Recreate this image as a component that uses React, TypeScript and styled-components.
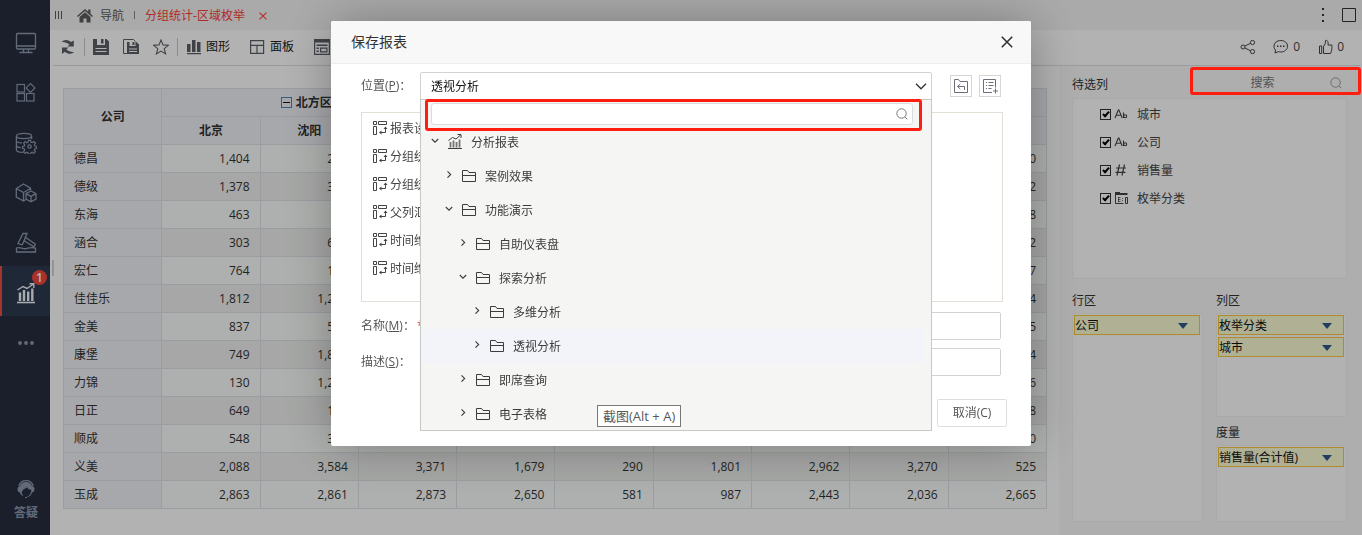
import React from 'react';
import styled, { createGlobalStyle } from 'styled-components';

const Global = createGlobalStyle`
  *, *::before, *::after { box-sizing: border-box; }
  body {
    margin: 0;
    background: #ffffff;
    color: #333333;
    font-family: "Open Sans", "Noto Sans CJK SC", sans-serif;
    font-size: 12px;
    line-height: 20px;
  }
  button, input, select {
    font: inherit;
    color: inherit;
    margin: 0;
    padding: 0;
    border: 0;
    background: none;
    outline: none;
  }
  a { color: inherit; text-decoration: none; }
  svg { display: block; flex: none; }
`;

/* ---------- shell ---------- */

const Shell = styled.div`
  display: flex;
  min-height: 100vh;
`;

const Sidebar = styled.nav`
  display: flex;
  flex-direction: column;
  flex: none;
  width: 50px;
  padding: 16px 0 12px;
  background: #282d3e;
  color: #8e99ae;
`;

const SideItem = styled.a<{ $active?: boolean }>`
  position: relative;
  display: flex;
  align-items: center;
  justify-content: center;
  height: 50px;
  padding-top: 4px;
  border-left: 2px solid ${p => (p.$active ? '#ee4a43' : 'transparent')};
  background: ${p => (p.$active ? '#2c3a50' : 'transparent')};
  color: ${p => (p.$active ? '#f2f4f7' : 'inherit')};
`;

const Badge = styled.span`
  position: absolute;
  top: 4px;
  left: 30px;
  width: 15px;
  height: 15px;
  border-radius: 50%;
  background: #f5453f;
  color: #ffffff;
  font-weight: 600;
  line-height: 15px;
  text-align: center;
`;

const Help = styled.a`
  display: flex;
  flex-direction: column;
  align-items: center;
  gap: 4px;
  margin-top: auto;
  padding-left: 2px;
  font-weight: 700;
`;

const Workspace = styled.div`
  display: flex;
  flex-direction: column;
  flex: 1;
  min-width: 0;
`;

const TabBar = styled.header`
  display: flex;
  align-items: center;
  height: 30px;
  padding: 0 6px 0 5px;
  background: #f4f4f4;
  color: #5c5c5c;
`;

const TabLink = styled.a<{ $active?: boolean }>`
  display: flex;
  align-items: center;
  gap: 7px;
  padding: 2px 10px 0;
  color: ${p => (p.$active ? '#fb3f3a' : 'inherit')};
`;

const TabRule = styled.span`
  width: 1px;
  height: 8px;
  background: #888888;
`;

const IconButton = styled.button`
  display: flex;
  align-items: center;
  justify-content: center;
`;

const MenuButton = styled(IconButton)`
  margin-right: 4px;
`;

const TabClose = styled(IconButton)`
  margin: 2px 0 0 4px;
  color: #fb3f3a;
`;

const Spacer = styled.span`
  flex: 1;
`;

const WindowTools = styled.div`
  display: flex;
  align-items: center;
  gap: 15px;
  color: #333333;
`;

const Toolbar = styled.div`
  display: flex;
  align-items: center;
  height: 36px;
  margin: 0 2px 0 3px;
  padding: 0 16px 2px 0;
  border-bottom: 1px solid #dfdfdf;
  color: #5b6068;
`;

const Tool = styled.button`
  display: flex;
  align-items: center;
  justify-content: center;
  flex: none;
  width: 30px;
  height: 30px;
`;

const LabelTool = styled.button`
  display: flex;
  align-items: center;
  gap: 4px;
  flex: none;
  height: 30px;
  margin-right: 6px;
  padding: 0 7px;
  span { color: #222222; }
`;

const ToolRule = styled.span`
  width: 1px;
  height: 18px;
  margin: 0 1px;
  background: #c8c8c8;
`;

const Social = styled.button`
  display: flex;
  align-items: center;
  gap: 4px;
  margin-left: 17px;
  color: #444444;
`;

const Content = styled.div`
  display: flex;
  flex: 1;
  min-height: 0;
`;

const Splitter = styled.span`
  align-self: center;
  flex: none;
  width: 2px;
  height: 16px;
  margin: 0 9px 65px 2px;
  background: #d5d5d5;
`;

/* ---------- cross table ---------- */

const TableArea = styled.main`
  flex: 1;
  min-width: 0;
  padding: 22px 12px 24px 0;
`;

const CrossTable = styled.table`
  width: 100%;
  border-collapse: collapse;
  table-layout: fixed;
  border: 1px solid #dde2e8;
  th, td {
    height: 28px;
    padding: 0 10px;
    border: 1px solid #dde2e8;
  }
  thead th {
    background: #f0f1f6;
    font-weight: 700;
    text-align: center;
  }
  tbody th {
    background: #f0f1f5;
    font-weight: 400;
    text-align: left;
  }
  td {
    background: #fafdfb;
    text-align: right;
  }
  tbody tr:nth-child(even) td { background: #eef0ee; }
`;

const GroupHead = styled.span`
  display: flex;
  align-items: center;
  justify-content: center;
  gap: 4px;
  padding-right: 6px;
`;

const Toggle = styled.button`
  display: block;
  width: 11px;
  height: 11px;
  border: 1px solid #4f86b8;
  &::after {
    content: '';
    display: block;
    height: 1px;
    margin: 0 1px;
    background: #111111;
  }
`;

/* ---------- field panel ---------- */

const FieldPanel = styled.aside`
  flex: none;
  width: 303px;
  padding: 0 15px 13px 13px;
  background: #fafafa;
`;

const PanelHead = styled.div`
  display: flex;
  align-items: center;
  justify-content: space-between;
  height: 32px;
`;

const PanelTitle = styled.h2`
  margin: 0;
  padding-top: 6px;
  font-size: 12px;
  font-weight: 400;
  line-height: 20px;
`;

const PanelSearch = styled.label`
  position: relative;
  display: flex;
  align-items: center;
  width: 152px;
  height: 20px;
  padding: 2px 5px 0 0;
  color: #999999;
  input {
    flex: 1;
    min-width: 0;
    height: 20px;
    text-align: center;
  }
  input::placeholder { color: #777777; opacity: 1; }
`;

const Callout = styled.span<{ $inset: string }>`
  position: absolute;
  inset: ${p => p.$inset};
  z-index: 20;
  border: 3px solid #ff1d10;
  border-radius: 3px;
  pointer-events: none;
`;

const Box = styled.div<{ $h: number; $pad: string }>`
  height: ${p => p.$h}px;
  padding: ${p => p.$pad};
  border: 1px solid #f2f2f2;
  background: #ffffff;
`;

const Field = styled.label`
  display: flex;
  align-items: center;
  height: 28px;
  color: #444444;
  span { margin-left: 9px; padding-top: 2px; }
  svg { margin-left: 3px; }
`;

const Check = styled.input`
  appearance: none;
  position: relative;
  width: 11px;
  height: 11px;
  border: 1px solid #333333;
  &:checked::after {
    content: '';
    position: absolute;
    top: 0;
    left: 3px;
    width: 4px;
    height: 7px;
    border: solid #000000;
    border-width: 0 2px 2px 0;
    transform: rotate(42deg);
  }
`;

const Zones = styled.div`
  display: grid;
  grid-template-columns: 1fr 1fr;
  column-gap: 13px;
  padding-top: 6px;
`;

const ZoneTitle = styled(PanelTitle)`
  height: 28px;
`;

const Chip = styled.div`
  display: flex;
  align-items: center;
  justify-content: space-between;
  height: 20px;
  margin-bottom: 2px;
  padding: 2px 11px 0 0;
  border: 1px solid #f8c93c;
  background: #fdfcd6;
  color: #111111;
  line-height: 16px;
`;

/* ---------- dialog ---------- */

const Backdrop = styled.div`
  position: fixed;
  inset: 0;
  z-index: 10;
  display: flex;
  align-items: flex-start;
  justify-content: center;
  padding-top: 21px;
  background: rgba(0, 0, 0, 0.3);
`;

const Dialog = styled.section`
  width: 700px;
  border-radius: 2px;
  background: #ffffff;
  box-shadow: 1px 1px 50px rgba(0, 0, 0, 0.3);
`;

const DialogHead = styled.header`
  display: flex;
  align-items: center;
  justify-content: space-between;
  height: 43px;
  padding: 0 18px 0 20px;
  border-bottom: 1px solid #eeeeee;
  border-radius: 2px 2px 0 0;
  background: #f8f8f8;
  h1 {
    margin: 0;
    font-size: 14px;
    font-weight: 400;
  }
`;

const DialogBody = styled.div`
  padding: 8px 28px 0 30px;
`;

const FormRow = styled.div`
  display: flex;
  align-items: center;
  height: 28px;
  margin: 0 2px 8px 0;
`;

const RowLabel = styled.label`
  flex: none;
  width: 59px;
  color: #555555;
  white-space: nowrap;
  em { color: #ff2a2a; font-style: normal; margin-left: 2px; }
`;

const Combo = styled.div`
  position: relative;
  flex: 1;
  margin-right: 11px;
`;

const Select = styled.select`
  display: block;
  appearance: none;
  width: 100%;
  height: 28px;
  padding: 2px 10px 0;
  border: 1px solid #d2d2d2;
  border-radius: 2px;
  background: #ffffff;
  color: #111111;
`;

const ComboArrow = styled.span`
  position: absolute;
  top: 11px;
  right: 5px;
  pointer-events: none;
`;

const SquareButton = styled(IconButton)`
  flex: none;
  width: 22px;
  height: 22px;
  margin-left: 7px;
  border: 1px solid #d8d6d2;
  color: #6a6f7a;
`;

const ReportList = styled.ul`
  height: 190px;
  margin: 12px 0 10px;
  padding: 1px 11px;
  border: 1px solid #e3dfd7;
  list-style: none;
  li {
    display: flex;
    align-items: center;
    gap: 2px;
    height: 28px;
    color: #444444;
  }
  span { padding-top: 2px; }
`;

const TextField = styled.input`
  flex: 1;
  min-width: 0;
  height: 28px;
  padding: 0 10px;
  border: 1px solid #d2d2d2;
  border-radius: 2px;
`;

const DialogFoot = styled.footer`
  display: flex;
  justify-content: flex-end;
  padding: 15px 24px 19px;
`;

const PlainButton = styled.button`
  width: 70px;
  height: 28px;
  border: 1px solid #dedede;
  border-radius: 2px;
  color: #555555;
`;

const Dropdown = styled.div`
  position: absolute;
  top: 27px;
  left: 0;
  right: 0;
  height: 332px;
  padding-top: 3px;
  border: 1px solid #c8c8c6;
  background: #f5f5f4;
`;

const TreeSearch = styled.label`
  position: relative;
  display: flex;
  align-items: center;
  height: 22px;
  margin: 0 18px 0 10px;
  padding: 0 4px 0 8px;
  border: 1px solid #dcdcdc;
  border-radius: 3px;
  background: #ffffff;
  color: #777777;
  input { flex: 1; min-width: 0; height: 20px; }
`;

const Tree = styled.ul`
  height: 305px;
  margin: 0 8px 0 0;
  padding: 0;
  overflow: hidden;
  list-style: none;
`;

const TreeRow = styled.li<{ $level: number; $selected?: boolean }>`
  display: flex;
  align-items: center;
  height: 34px;
  padding-left: ${p => 10 + p.$level * 14}px;
  background: ${p => (p.$selected ? '#f3f4f9' : 'transparent')};
  color: #3c3c3c;
  button { height: 14px; margin: 0 8px 4px 0; }
  span { margin-left: 8px; padding-top: 2px; }
`;

const HintTip = styled.span`
  position: absolute;
  top: 305px;
  left: 176px;
  height: 22px;
  padding: 0 5px;
  border: 1px solid #767676;
  background: #ffffff;
  color: #575757;
  font-size: 13px;
  line-height: 20px;
  white-space: pre;
`;

/* ---------- icons ---------- */

type IconProps = { size?: number; box?: number; sw?: number; children: React.ReactNode };
const Icon = ({ size = 16, box = 16, sw = 1, children }: IconProps) => (
  <svg width={size} height={size} viewBox={`0 0 ${box} ${box}`} fill="none" stroke="currentColor" strokeWidth={sw}>
    {children}
  </svg>
);

const MonitorIcon = () => (
  <Icon size={22} box={22} sw={1.3}>
    <rect x="1.5" y="1.5" width="19" height="15.500" rx="1" />
    <path d="M2 14h18M8.500 17v3M13.500 17v3M4.500 20.500h13" />
  </Icon>
);
const BlocksIcon = () => (
  <Icon size={22} box={22} sw={1.2}>
    <rect x="2" y="2.500" width="7.5" height="7.5" />
    <rect x="2" y="11.500" width="7.5" height="7.5" />
    <rect x="11.500" y="11.500" width="7.5" height="7.5" />
    <path d="M15.500 1.500l4.400 4.400-4.400 4.400-4.400-4.400z" />
  </Icon>
);
const DatabaseIcon = () => (
  <Icon size={22} box={22} sw={1.3}>
    <ellipse cx="9" cy="4" rx="7.6" ry="2.6" />
    <path d="M1.4 4v14c0 1.500 3 2.400 7 2.400M16.600 4v3M1.400 8.700c0 1.400 2 2.100 5.600 2.200M1.400 13.500c0 1.300 1.600 2 4.400 2.200" />
    <circle cx="14.500" cy="14.500" r="1.700" />
    <path d="M13.400 8.300h2.200l.4 1.900 1.300.5 1.600-1.100 1.600 1.600-1.100 1.700.5 1.200 1.400.3v2.200l-1.500.3-.5 1.300 1.100 1.600-1.600 1.600-1.600-1.100-1.200.5-.4 1.400h-2.200l-.4-1.400-1.200-.5-1.600 1.100-1.600-1.600 1.100-1.600-.5-1.300-1.600-.3v-2.200l1.600-.3.5-1.200-1.100-1.700 1.600-1.600 1.600 1.100 1.200-.5z" strokeWidth="1.200" />
  </Icon>
);
const CubesIcon = () => (
  <Icon size={22} box={22} sw={1.3}>
    <path d="M11 17.500l-2.500 1.500-7.200-4V6.500L8.500 2l7 4.200v2M1.300 6.500l7.200 4 7-4M8.500 10.500v8.500" />
    <path d="M16 9l5 2.600v5.400L16 19.800l-5-2.800v-5.400zM11 11.600l5 2.800 5-2.800M16 14.400v5.400" />
  </Icon>
);
const GavelIcon = () => (
  <Icon size={22} box={22} sw={1.3}>
    <path d="M8 1.500h4l-1.600 3.700 10 7-1.500 2.600-9.800-6L7.200 12.800l-4.200-1.300z" />
    <path d="M9.100 8.800l1.300-3.600M1.500 20v-4c3.500-1.800 6 1.500 9.800.6 3-.8 5-1.800 9.200-.6v4z" />
  </Icon>
);
const TrendIcon = () => (
  <Icon size={22} box={22} sw={1.400}>
    <path d="M2 20.500h18" strokeWidth="1.600" />
    <path d="M5 19v-8.500M9 19v-11M13.200 19v-9.500M17.300 19V6.500" strokeWidth="2.400" />
    <path d="M2.500 8L8 4.500l4 2 6.500-4.500M14.500 1.800h4.300V6" />
  </Icon>
);
const DotsIcon = () => (
  <svg width="18" height="4" viewBox="0 0 18 4" fill="currentColor">
    <circle cx="3" cy="2" r="1.900" /><circle cx="9" cy="2" r="1.900" /><circle cx="15" cy="2" r="1.900" />
  </svg>
);
const HeadsetIcon = () => (
  <Icon size={20} box={20}>
    <path d="M2.800 7A7.500 7.500 0 0 1 17.200 7" strokeWidth="1.300" />
    <path d="M4 7.200C5 3.800 7.300 3 10 3s5.200 1 6 4.200c1.600 0 2.500 1 2.500 3s-1 3-2.300 3C15.500 16 13 18 10.800 18.200V19H9v-1h1c3-.6 5.300-3.200 5.300-7.300-2.300-.2-3.500-1.100-4.300-2.500-1.700 1.700-4 1.800-5 4.300-.6 1.500.5 3.700 1.500 4.700-2-.7-3.300-2-3.800-4C2.300 13.200 1.500 12 1.500 10.200s1-3 2.500-3z" fill="currentColor" stroke="none" />
  </Icon>
);
const GripIcon = () => (
  <svg width="8" height="8" viewBox="0 0 8 8" stroke="currentColor"><path d="M.5 0v8M3.500 0v8M6.500 0v8" /></svg>
);
const HomeIcon = () => (
  <Icon>
    <path d="M8 1L0 7.900l1 1.200 7-6 7 6 1-1.200-2.500-2.200V1.500h-2.300v2.200z M8 4.200L2.500 9v5.500h4V10.500h3v4h4V9z" fill="currentColor" stroke="none" />
  </Icon>
);
const CloseIcon = ({ size = 12, sw = 1.600 }: { size?: number; sw?: number }) => (
  <Icon size={size} box={12} sw={sw}><path d="M.8.8l10.400 10.400M11.200.8L.8 11.200" /></Icon>
);
const RefreshIcon = () => (
  <Icon>
    <path d="M1.500 3C4 .3 8 .2 11 3l2.800-1.500v6H7.500l2-2C7 3.500 4.500 2.700 1.500 3z M14.300 13c-3 2.500-6.500 2.500-9.300-.3l-3 2.300V8.500h6.500l-2.100 2.100c2 2 4.900 2.700 7.900 2.400z" fill="currentColor" stroke="none" />
  </Icon>
);
const SaveIcon = () => (
  <Icon>
    <path fillRule="evenodd" d="M0 0h4v6h8V0h1.500L16 2.500V16H0zM2.500 9v1h11V9zM2.500 12v1h11v-1z" fill="currentColor" stroke="none" />
    <path d="M8 0h2.500v4.500H8z" fill="currentColor" stroke="none" />
  </Icon>
);
const SaveAsIcon = () => (
  <Icon>
    <path d="M4 14.500H.5V.5h10l2 2" />
    <path fillRule="evenodd" d="M4 3h2.500v4h6V3h1L16 5.500V15H4zM6 9.500v1h8v-1zM6 12v1h8v-1z" fill="currentColor" stroke="none" />
    <path d="M9.500 3h2v3h-2z" fill="currentColor" stroke="none" />
  </Icon>
);
const StarIcon = () => (
  <Icon sw={1.100}><path d="M8 1l2 4.900 5.300.4-4.100 3.400 1.400 5.200L8 12.100l-4.600 2.800 1.400-5.200L.7 6.300l5.300-.4z" /></Icon>
);
const BarsIcon = () => (
  <Icon><path d="M1 5h3.500v8H1zM6 1h3.500v12H6zM11 3h3.500v10H11zM1 14h14v1.200H1z" fill="currentColor" stroke="none" /></Icon>
);
const PanelIcon = () => (
  <Icon sw={1.200}><path d="M.6 1.600h13v12.800H.6zM.6 6.400h13M7 6.400v8" /></Icon>
);
const FormIcon = () => (
  <Icon sw={1.200}>
    <path d="M.6.600h14.800v14.800H.6z" />
    <path d="M1 1h14v2.500H1zM2.500 5.500h11V7h-11zM2.500 8.500h2.300V10H2.500zM2.500 11.500h2.300V13H2.500z" fill="currentColor" stroke="none" />
    <path d="M6.600 9.100h6.300v3.800H6.600z" />
  </Icon>
);
const ShareIcon = () => (
  <Icon>
    <circle cx="3" cy="8" r="2" /><circle cx="12.500" cy="3.500" r="2.100" /><circle cx="12.500" cy="12.600" r="2.100" />
    <path d="M5 7l5.500-2.700M5 9l5.500 2.800" />
  </Icon>
);
const CommentIcon = () => (
  <Icon>
    <path d="M7.800 1.500c4 0 6.700 2.500 6.700 5.700S11.800 13 7.800 13c-.9 0-1.700-.1-2.500-.4L2 14l.5-3C1.500 10 1 8.700 1 7.200c0-3.200 2.800-5.700 6.800-5.700z" />
    <path d="M4 7.200h1.500M7 7.200h1.500M10 7.200h1.500" strokeWidth="1.500" />
  </Icon>
);
const ThumbIcon = () => (
  <Icon>
    <path d="M2.500 7h2.200v7.500H2.500zM6.500 7.200C8.500 5.800 8.300 3.500 8.600 1.500c1.700-.6 2.800.8 2.500 4.500h3.700c.5 3-.2 6-1.200 8.500H6.500z" />
  </Icon>
);
const KebabIcon = () => (
  <svg width="8" height="16" viewBox="0 0 8 16" fill="currentColor">
    <path d="M3 1h2v2H3zM3 7h2v2H3zM3 13h2v2H3z" />
  </svg>
);
const SquareIcon = () => (
  <Icon size={14} box={14}><path d="M.5.500h13v13H.5z" /></Icon>
);
const SearchIcon = () => (
  <Icon size={12} box={12}><circle cx="5.500" cy="5.500" r="4.700" /><path d="M9 9l2.300 2.300" /></Icon>
);
const TextTypeIcon = () => (
  <Icon size={14} box={14} sw={1.100}>
    <path d="M1 11L4.300 3h.6L8.200 11M2.200 8.300H7M9.500 5.500V11" />
    <circle cx="11.200" cy="9.200" r="1.500" />
  </Icon>
);
const NumberTypeIcon = () => (
  <Icon size={14} box={14} sw={1.200}><path d="M5.500 1.500L3 12.500M10.500 1.500L8 12.500M2 5h10M1.500 9.300h10" /></Icon>
);
const EnumTypeIcon = () => (
  <Icon size={14} box={14}>
    <path d="M1.500 2v10.500h8M11.500 6.500h2v6h-2z" />
    <path d="M1 1h5v1h7.500v2H1z" fill="currentColor" stroke="none" />
    <path d="M4 6.500h2.500M4 8.500h2.500M4 10.500h2.500M4.500 6v5M8 7.500h1M8 9.500h1" strokeOpacity=".75" />
  </Icon>
);
const TriangleIcon = () => (
  <svg width="10" height="6" viewBox="0 0 10 6" fill="#315b8c"><path d="M0 0h10L5 6z" /></svg>
);
const ChevronDown = () => (
  <svg width="12" height="7" viewBox="0 0 12 7" fill="none" stroke="#333333" strokeWidth="1.300"><path d="M1 .8l5 5 5-5" /></svg>
);
const TreeArrow = ({ open }: { open?: boolean }) => (
  <Icon size={8} box={8} sw={1.100}><path d={open ? 'M.8 3L4 6.200 7.200 3' : 'M2.500 1.300l3.200 3.200-3.200 3.200'} /></Icon>
);
const FolderIcon = () => (
  <Icon><path d="M1.500 2.500h5l1.500 2h6.500v9h-13zM1.500 7.500h13" /></Icon>
);
const TreeTrendIcon = () => (
  <Icon>
    <path d="M1 14.500h14" />
    <path d="M3.500 13.500V8M6.500 13.500V6.500M9.500 13.500V8M12.500 13.500V5.500" strokeWidth="1.800" strokeOpacity=".7" />
    <path d="M1.500 6.500l4-3 3.500 1.500L13.500 1M10.500.500h3.500V4" />
  </Icon>
);
const ReportIcon = () => (
  <Icon size={15} box={15}>
    <path d="M.5.500h3v3h-3zM5.500.500h8v3h-8zM.5 5.500h3v8h-3zM12.500 7v4.500h-4.500" />
    <path d="M10.500 8l2-2.500 2 2.500zM8.500 9.500v4l-2.500-2z" fill="currentColor" stroke="none" />
  </Icon>
);
const FolderBackIcon = () => (
  <Icon><path d="M1.500 1.500h4l1.500 2h7.500v11h-13zM11.500 12V8.500H5M7.300 6L4.500 8.500l2.800 2.500" /></Icon>
);
const ListAddIcon = () => (
  <Icon>
    <path d="M10 14.500H1.500v-13h12v8M4 4.500h1M6.500 4.500h5M4 7.500h1M6.500 7.500h5M4 10.500h1M6.500 10.500h3M13.500 10.500v5M11 13h5" />
  </Icon>
);

/* ---------- data ---------- */

const sideIcons = [MonitorIcon, BlocksIcon, DatabaseIcon, CubesIcon, GavelIcon];

const rows: [string, ...string[]][] = [
  ['德昌', '1,404', '265', '', '', '', '', '', '', '520'],
  ['德级', '1,378', '318', '', '', '', '', '', '', '412'],
  ['东海', '463', '', '', '', '', '', '', '', '328'],
  ['涵合', '303', '640', '', '', '', '', '', '', '532'],
  ['宏仁', '764', '152', '', '', '', '', '', '', '247'],
  ['佳佳乐', '1,812', '1,256', '', '', '', '', '', '', '784'],
  ['金美', '837', '530', '', '', '', '', '', '', '615'],
  ['康堡', '749', '1,824', '', '', '', '', '', '', '924'],
  ['力锦', '130', '1,208', '', '', '', '', '', '', '336'],
  ['日正', '649', '174', '', '', '', '', '', '', '458'],
  ['顺成', '548', '362', '', '', '', '', '', '', '720'],
  ['义美', '2,088', '3,584', '3,371', '1,679', '290', '1,801', '2,962', '3,270', '525'],
  ['玉成', '2,863', '2,861', '2,873', '2,650', '581', '987', '2,443', '2,036', '2,665'],
];

const fields: [string, () => React.ReactElement][] = [
  ['城市', TextTypeIcon],
  ['公司', TextTypeIcon],
  ['销售量', NumberTypeIcon],
  ['枚举分类', EnumTypeIcon],
];

const reports = ['报表设计', '分组统计', '分组统计', '父列汇总', '时间维度', '时间维度'];

const tree = [
  { name: '分析报表', level: 0, open: true, root: true },
  { name: '案例效果', level: 1 },
  { name: '功能演示', level: 1, open: true },
  { name: '自助仪表盘', level: 2 },
  { name: '探索分析', level: 2, open: true },
  { name: '多维分析', level: 3 },
  { name: '透视分析', level: 3, selected: true },
  { name: '即席查询', level: 2 },
  { name: '电子表格', level: 2 },
];

const ZoneChip = ({ text }: { text: string }) => (
  <Chip>
    {text}
    <IconButton aria-label={text}><TriangleIcon /></IconButton>
  </Chip>
);

function SaveDialog() {
  return (
    <Backdrop>
      <Dialog role="dialog" aria-labelledby="save-title">
        <DialogHead>
          <h1 id="save-title">保存报表</h1>
          <IconButton aria-label="关闭"><CloseIcon /></IconButton>
        </DialogHead>
        <DialogBody>
          <FormRow>
            <RowLabel htmlFor="location">位置(<u>P</u>)：</RowLabel>
            <Combo>
              <Select id="location" defaultValue="透视分析">
                <option>透视分析</option>
              </Select>
              <ComboArrow><ChevronDown /></ComboArrow>
              <Dropdown>
                <TreeSearch>
                  <input type="text" aria-label="搜索" />
                  <SearchIcon />
                  <Callout $inset="-5px -10px -7px -7px" />
                </TreeSearch>
                <Tree>
                  {tree.map(n => (
                    <TreeRow key={n.name} $level={n.level} $selected={n.selected}>
                      <IconButton aria-label={n.name}><TreeArrow open={n.open} /></IconButton>
                      {n.root ? <TreeTrendIcon /> : <FolderIcon />}
                      <span>{n.name}</span>
                    </TreeRow>
                  ))}
                </Tree>
                <HintTip role="tooltip">截图(Alt + A)</HintTip>
              </Dropdown>
            </Combo>
            <SquareButton aria-label="上级目录"><FolderBackIcon /></SquareButton>
            <SquareButton aria-label="新建目录"><ListAddIcon /></SquareButton>
          </FormRow>
          <ReportList>
            {reports.map((r, i) => <li key={i}><ReportIcon /><span>{r}</span></li>)}
          </ReportList>
          <FormRow>
            <RowLabel htmlFor="name">名称(<u>M</u>)：<em>*</em></RowLabel>
            <TextField id="name" type="text" />
          </FormRow>
          <FormRow>
            <RowLabel htmlFor="desc">描述(<u>S</u>)：</RowLabel>
            <TextField id="desc" type="text" />
          </FormRow>
        </DialogBody>
        <DialogFoot>
          <PlainButton>取消(C)</PlainButton>
        </DialogFoot>
      </Dialog>
    </Backdrop>
  );
}

export default function App() {
  return (
    <>
      <Global />
      <Shell>
        <Sidebar>
          {sideIcons.map((Glyph, i) => <SideItem href="#" key={i}><Glyph /></SideItem>)}
          <SideItem href="#" $active><TrendIcon /><Badge>1</Badge></SideItem>
          <SideItem href="#"><DotsIcon /></SideItem>
          <Help href="#"><HeadsetIcon />答疑</Help>
        </Sidebar>
        <Workspace>
          <TabBar>
            <MenuButton aria-label="菜单"><GripIcon /></MenuButton>
            <TabLink href="#"><HomeIcon />导航</TabLink>
            <TabRule />
            <TabLink href="#" $active>分组统计-区域枚举</TabLink>
            <TabClose aria-label="关闭标签"><CloseIcon size={8} /></TabClose>
            <Spacer />
            <WindowTools>
              <IconButton aria-label="更多"><KebabIcon /></IconButton>
              <IconButton aria-label="最大化"><SquareIcon /></IconButton>
            </WindowTools>
          </TabBar>
          <Toolbar>
            <Tool aria-label="刷新"><RefreshIcon /></Tool>
            <ToolRule />
            <Tool aria-label="保存"><SaveIcon /></Tool>
            <Tool aria-label="另存为"><SaveAsIcon /></Tool>
            <Tool aria-label="收藏"><StarIcon /></Tool>
            <ToolRule />
            <LabelTool><BarsIcon /><span>图形</span></LabelTool>
            <LabelTool><PanelIcon /><span>面板</span></LabelTool>
            <LabelTool aria-label="表单"><FormIcon /></LabelTool>
            <Spacer />
            <Social aria-label="分享"><ShareIcon /></Social>
            <Social><CommentIcon />0</Social>
            <Social><ThumbIcon />0</Social>
          </Toolbar>
          <Content>
            <Splitter />
            <TableArea>
              <CrossTable>
                <thead>
                  <tr>
                    <th rowSpan={2}>公司</th>
                    <th colSpan={3}><GroupHead><Toggle aria-label="折叠" />北方区</GroupHead></th>
                    <th colSpan={3} />
                    <th colSpan={3} />
                  </tr>
                  <tr>
                    <th>北京</th>
                    <th>沈阳</th>
                    <th /><th /><th /><th /><th /><th /><th />
                  </tr>
                </thead>
                <tbody>
                  {rows.map(([name, ...cells]) => (
                    <tr key={name}>
                      <th scope="row">{name}</th>
                      {cells.map((c, i) => <td key={i}>{c}</td>)}
                    </tr>
                  ))}
                </tbody>
              </CrossTable>
            </TableArea>
            <FieldPanel>
              <PanelHead>
                <PanelTitle>待选列</PanelTitle>
                <PanelSearch>
                  <input type="text" placeholder="搜索" aria-label="搜索" />
                  <SearchIcon />
                  <Callout $inset="-5px -14px -3px -5px" />
                </PanelSearch>
              </PanelHead>
              <Box $h={181} $pad="1px 27px">
                {fields.map(([name, Glyph]) => (
                  <Field key={name}>
                    <Check type="checkbox" defaultChecked />
                    <Glyph />
                    <span>{name}</span>
                  </Field>
                ))}
              </Box>
              <Zones>
                <div>
                  <ZoneTitle>行区</ZoneTitle>
                  <Box $h={209} $pad="1px 2px 0 1px"><ZoneChip text="公司" /></Box>
                </div>
                <div>
                  <ZoneTitle>列区</ZoneTitle>
                  <Box $h={104} $pad="1px 2px 0 1px">
                    <ZoneChip text="枚举分类" />
                    <ZoneChip text="城市" />
                  </Box>
                  <ZoneTitle>度量</ZoneTitle>
                  <Box $h={77} $pad="1px 2px 0 1px"><ZoneChip text="销售量(合计值)" /></Box>
                </div>
              </Zones>
            </FieldPanel>
          </Content>
        </Workspace>
      </Shell>
      <SaveDialog />
    </>
  );
}
